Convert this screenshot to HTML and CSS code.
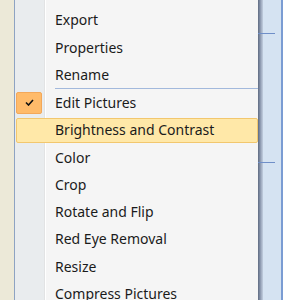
FILE: index.html
```html
<!DOCTYPE html>
<html lang="en">
<head>
    <meta charset="UTF-8">
    <title>Picture menu</title>
    <link rel="stylesheet" href="styles.css">
</head>
<body>
    <div class="screen">
        <div class="desk"></div>

        <div class="menu">
            <div class="item">Export</div>
            <div class="item">Properties</div>
            <div class="item">Rename</div>
            <div class="separator"></div>
            <div class="item checked">
                <span class="check">
                    <svg width="9" height="7" viewBox="0 0 9 7">
                        <path d="M1 3.5 L3.5 6 L8 1" fill="none" stroke="#111" stroke-width="1.6"/>
                    </svg>
                </span>
                Edit Pictures
            </div>
            <div class="item hover">Brightness and Contrast</div>
            <div class="item">Color</div>
            <div class="item">Crop</div>
            <div class="item">Rotate and Flip</div>
            <div class="item">Red Eye Removal</div>
            <div class="item">Resize</div>
            <div class="item">Compress Pictures</div>
        </div>

        <div class="shadow"></div>

        <div class="panel">
            <div class="tick tick-top"></div>
            <div class="tick tick-mid"></div>
        </div>
    </div>
</body>
</html>
```

FILE: styles.css
```css
body {
    margin: 0;
    font-family: 'Noto Sans', 'Open Sans', sans-serif;
    font-size: 14px;
    color: #1b1b1b;
    background-color: #d5e3f2;
}
.screen {
    display: flex;
    height: 300px;
    overflow: hidden;
}
.desk {
    width: 14px;
    background-color: #ece9d8;
    flex-shrink: 0;
}
.menu {
    width: 243px;
    flex-shrink: 0;
    padding-top: 6.4px;
    border-left: 1px solid #8ea3c2;
    background: linear-gradient(to right,
        #e9ecee 0, #e9ecee 29px,
        #e2e3e4 29px, #e2e3e4 30px,
        #ffffff 30px, #ffffff 31px,
        #f5f5f5 31px);
}
.item {
    position: relative;
    height: 27.25px;
    line-height: 27.25px;
    padding-left: 40px;
    white-space: nowrap;
    box-sizing: border-box;
}
.separator {
    height: 1px;
    margin-left: 40px;
    background-color: #a3b9dc;
}
.check {
    position: absolute;
    left: 1px;
    top: 2.5px;
    width: 26px;
    height: 22px;
    box-sizing: border-box;
    border: 1px solid #f3a85a;
    border-radius: 2px;
    background-color: #ffbb6a;
    display: flex;
    align-items: center;
    justify-content: center;
}
.hover::before {
    content: '';
    position: absolute;
    left: 1px;
    right: 0;
    top: 1.5px;
    bottom: 0.5px;
    border: 1px solid #f2c76e;
    border-radius: 2px;
    background-color: #ffe8a8;
    z-index: -1;
}
.hover {
    z-index: 0;
}
.shadow {
    width: 5px;
    flex-shrink: 0;
    background: linear-gradient(to right, #5f6b80, #7d8aa2, #a2aec2, #c2cfe0);
}
.panel {
    position: relative;
    flex: 1;
    background-color: #d5e3f2;
    border-right: 2px solid #7a9cd3;
}
.tick {
    position: absolute;
    left: -5px;
    width: 17px;
    height: 1px;
    background-color: #6f8fc8;
}
.tick-top {
    top: 33px;
}
.tick-mid {
    top: 162px;
}
```
